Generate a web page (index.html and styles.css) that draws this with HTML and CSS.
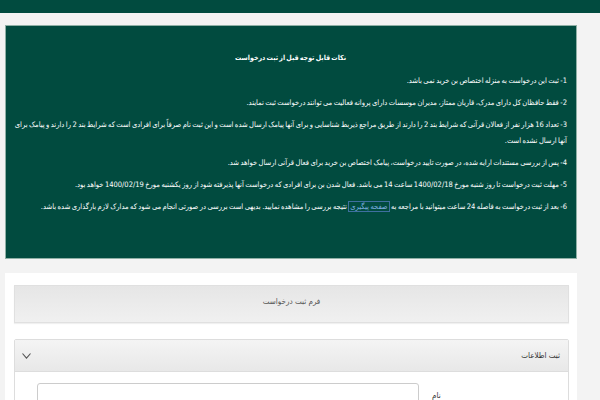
FILE: index.html
```html
<!DOCTYPE html>
<html lang="fa" dir="rtl">
<head>
<meta charset="utf-8">
<title>ثبت درخواست</title>
<link rel="stylesheet" href="styles.css">
</head>
<body>
<div class="topbar"></div>
<div class="main">
  <section class="notice">
    <h3 class="notice-title">نکات قابل توجه قبل از ثبت درخواست</h3>
    <p>1- ثبت این درخواست به منزله اختصاص بن خرید نمی باشد.</p>
    <p>2- فقط حافظان کل دارای مدرک، قاریان ممتاز، مدیران موسسات دارای پروانه فعالیت می توانند درخواست ثبت نمایند.</p>
    <p>3- تعداد 16 هزار نفر از فعالان قرآنی که شرایط بند 2 را دارند از طریق مراجع ذیربط شناسایی و برای آنها پیامک ارسال شده است و این ثبت نام صرفاً برای افرادی است که شرایط بند 2 را دارند و پیامک برای آنها ارسال نشده است.</p>
    <p>4- پس از بررسی مستندات ارایه شده، در صورت تایید درخواست، پیامک اختصاص بن خرید برای فعال قرآنی ارسال خواهد شد.</p>
    <p>5- مهلت ثبت درخواست تا روز شنبه مورخ 1400/02/18 ساعت 14 می باشد. فعال شدن بن برای افرادی که درخواست آنها پذیرفته شود از روز یکشنبه مورخ 1400/02/19 خواهد بود.</p>
    <p>6- بعد از ثبت درخواست به فاصله 24 ساعت میتوانید با مراجعه به <a class="track-link" href="#">صفحه پیگیری</a> نتیجه بررسی را مشاهده نمایید. بدیهی است بررسی در صورتی انجام می شود که مدارک لازم بارگذاری شده باشد.</p>
  </section>
  <section class="card">
    <div class="form-title">فرم ثبت درخواست</div>
    <div class="panel">
      <div class="panel-head">
        <span class="panel-name">ثبت اطلاعات</span>
        <svg class="chev" width="9" height="6" viewBox="0 0 9 6"><path d="M0.5 0.5 L4.5 5.2 L8.5 0.5" fill="none" stroke="#555" stroke-width="1.1"/></svg>
      </div>
      <div class="panel-body">
        <div class="field">
          <label class="field-label">نام</label>
          <input class="field-input" type="text">
        </div>
      </div>
    </div>
  </section>
</div>
</body>
</html>
```

FILE: styles.css
```css
html, body {
  margin: 0;
  padding: 0;
}
body {
  background: #f3f3f3;
  font-family: "DejaVu Sans Condensed", "Noto Sans Arabic", "DejaVu Sans", sans-serif;
  color: #333;
}
.topbar {
  height: 13px;
  background: #014b3f;
}
.main {
  padding: 12px 23px 0 5px;
}
.notice {
  background: #014b3f;
  border: 1px solid #8fb0a6;
  padding: 23px 9px 0 8px;
  box-sizing: border-box;
  height: 234px;
  color: #fff;
}
.notice-title {
  margin: 0 0 6px;
  font-size: 7px;
  font-weight: bold;
  text-align: center;
  line-height: 18px;
  word-spacing: -1px;
}
.notice p {
  margin: 0 0 6px;
  font-size: 7.5px;
  line-height: 16px;
  word-spacing: -0.7px;
}
.track-link {
  color: #7fb0e0;
  text-decoration: none;
  border: 1px solid #3f6f9f;
  padding: 0 1px;
}
.card {
  margin-top: 14px;
  background: #fff;
  padding: 12px 8px 20px 9px;
}
.form-title {
  height: 38px;
  box-sizing: border-box;
  padding-top: 9px;
  background: linear-gradient(#e6e6e6, #f0f0f0);
  border: 1px solid #e0e0e0;
  box-shadow: 0 1px 1px rgba(0,0,0,0.06);
  text-align: center;
  font-size: 8px;
  color: #555;
  line-height: 14px;
}
.panel {
  margin-top: 16px;
  border: 1px solid #ddd;
  border-radius: 2px;
}
.panel-head {
  height: 32px;
  box-sizing: border-box;
  display: flex;
  align-items: center;
  justify-content: space-between;
  padding: 0 8px 0 7px;
  background: linear-gradient(#f4f4f4, #e8e8e8);
  border-bottom: 1px solid #ddd;
  font-size: 8px;
  color: #333;
}
.chev {
  display: block;
}
.panel-body {
  padding: 11px 22px 20px 22px;
}
.field {
  display: flex;
  align-items: flex-start;
}
.field-label {
  flex: 1;
  padding: 6px 0 0 13px;
  text-align: left;
  font-size: 8px;
  line-height: 14px;
  color: #333;
}
.field-input {
  width: 382px;
  height: 34px;
  box-sizing: border-box;
  border: 1px solid #ccc;
  border-radius: 3px;
  background: #fff;
  margin: 0;
}
```
